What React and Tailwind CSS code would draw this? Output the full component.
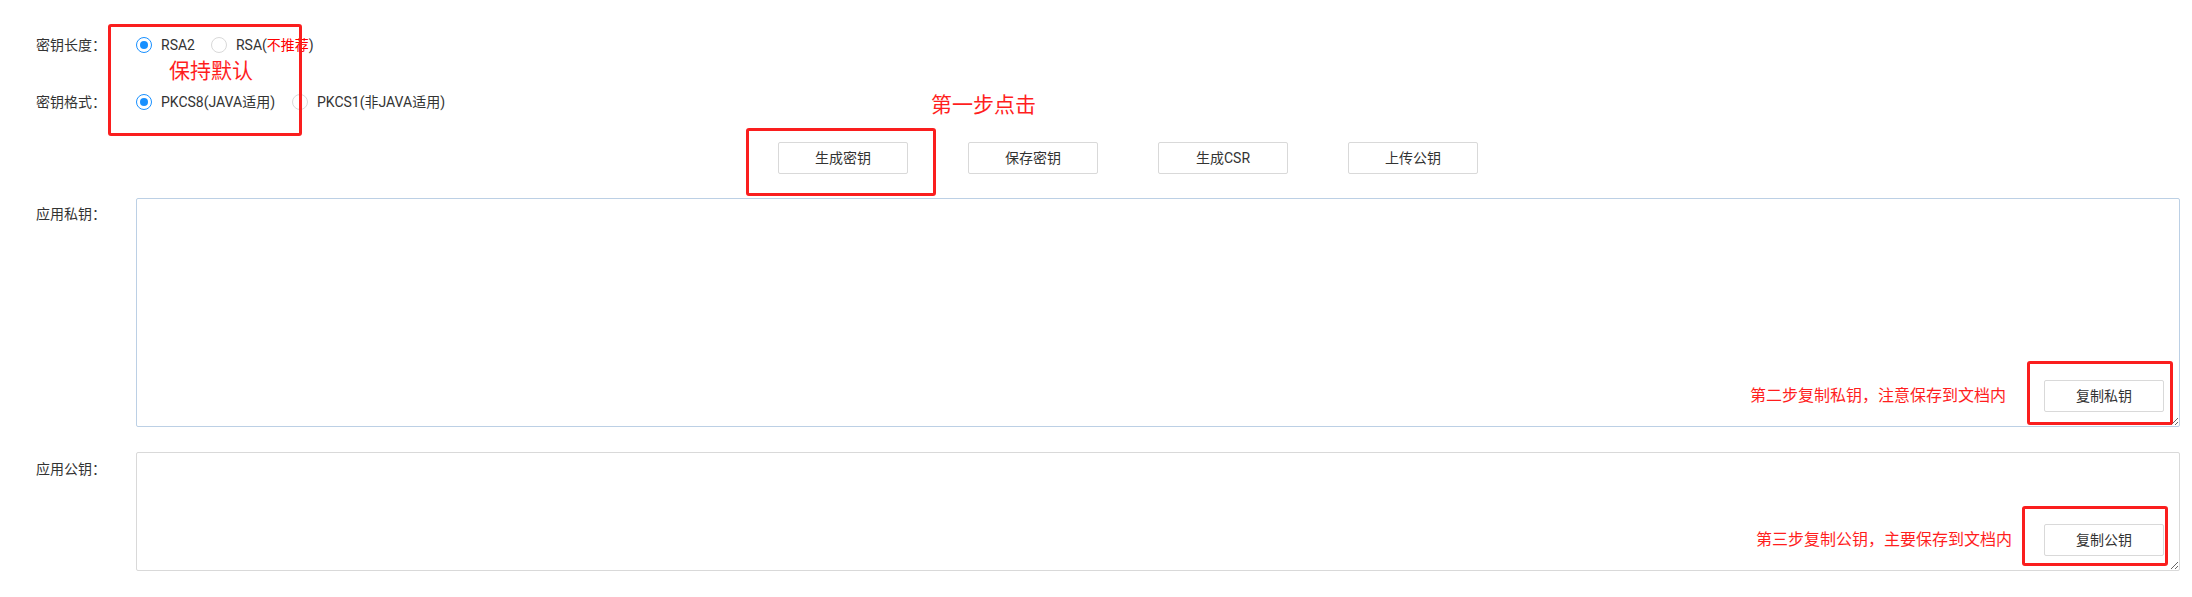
import React from "react";

function Radio({ checked }) {
  return checked ? (
    <span className="w-4 h-4 rounded-full border border-[#1890ff] bg-white flex items-center justify-center shrink-0">
      <span className="w-2 h-2 rounded-full bg-[#1890ff]" />
    </span>
  ) : (
    <span className="w-4 h-4 rounded-full border border-[#d9d9d9] bg-white shrink-0" />
  );
}

function Option({ checked, children }) {
  return (
    <label className="flex items-center">
      <Radio checked={checked} />
      <span className="ml-[9px] whitespace-nowrap">{children}</span>
    </label>
  );
}

function Btn({ children, w = "w-[130px]" }) {
  return (
    <button className={`${w} h-[32px] border border-[#d9d9d9] rounded-[2px] bg-white text-[14px] text-[#333] flex items-center justify-center`}>
      {children}
    </button>
  );
}

export default function App() {
  return (
    <div className="w-[2192px] h-[597px] bg-white text-[#333] text-[14px] font-[Roboto,'Noto_Sans_CJK_SC',sans-serif] overflow-hidden">
      {/* top settings */}
      <div className="relative pt-[29px]">
        <div className="flex items-center h-8">
          <div className="w-[136px] pl-[36px] shrink-0">密钥长度：</div>
          <div className="flex items-center gap-[16px]">
            <Option checked>RSA2</Option>
            <Option>
              RSA(<span className="text-[#ff0000]">不推荐</span>)
            </Option>
          </div>
        </div>
        <div className="flex items-center h-8 mt-[25px]">
          <div className="w-[136px] pl-[36px] shrink-0">密钥格式：</div>
          <div className="flex items-center gap-[17px]">
            <Option checked>PKCS8(JAVA适用)</Option>
            <Option>PKCS1(非JAVA适用)</Option>
          </div>
        </div>
        <div className="absolute left-[108px] top-[24px] w-[194px] h-[112px] border-[3px] border-[#fa1e1e] rounded-[3px]" />
        <div className="absolute left-[169px] top-[59px] text-[21px] leading-[25px] text-[#ff1e1e] whitespace-nowrap">
          保持默认
        </div>
      </div>

      {/* action buttons */}
      <div className="flex mt-[24px] ml-[778px] gap-[60px]">
        <div className="relative">
          <Btn>生成密钥</Btn>
          <div className="absolute -left-[32px] -right-[28px] -top-[14px] -bottom-[22px] border-[3px] border-[#fa1e1e] rounded-[3px]" />
          <div className="absolute left-[153px] -top-[49px] text-[21px] leading-[25px] text-[#ff1e1e] whitespace-nowrap">
            第一步点击
          </div>
        </div>
        <Btn>保存密钥</Btn>
        <Btn>生成CSR</Btn>
        <Btn>上传公钥</Btn>
      </div>

      {/* private key */}
      <div className="flex mt-[24px] pr-[12px]">
        <div className="w-[136px] pl-[36px] pt-[6px] leading-[20px] shrink-0">应用私钥：</div>
        <div className="relative flex-1 h-[229px]">
          <textarea className="block w-full h-full border border-[#bcd0e5] rounded-[2px] bg-white outline-none" />
          <div className="absolute right-[16px] bottom-[15px] flex items-center">
            <span className="text-[16px] text-[#ff1e1e] mr-[38px] whitespace-nowrap">第二步复制私钥，注意保存到文档内</span>
            <div className="relative">
              <Btn w="w-[120px]">复制私钥</Btn>
              <div className="absolute -left-[17px] -right-[9px] -top-[19px] -bottom-[13px] border-[3px] border-[#fa1e1e] rounded-[3px]" />
            </div>
          </div>
        </div>
      </div>

      {/* public key */}
      <div className="flex mt-[25px] pr-[12px]">
        <div className="w-[136px] pl-[36px] pt-[7px] leading-[20px] shrink-0">应用公钥：</div>
        <div className="relative flex-1 h-[119px]">
          <textarea className="block w-full h-full border border-[#d9d9d9] rounded-[2px] bg-white outline-none" />
          <div className="absolute right-[16px] bottom-[15px] flex items-center">
            <span className="text-[16px] text-[#ff1e1e] mr-[32px] whitespace-nowrap">第三步复制公钥，主要保存到文档内</span>
            <div className="relative">
              <Btn w="w-[120px]">复制公钥</Btn>
              <div className="absolute -left-[22px] -right-[4px] -top-[18px] -bottom-[10px] border-[3px] border-[#fa1e1e] rounded-[3px]" />
            </div>
          </div>
        </div>
      </div>
    </div>
  );
}
